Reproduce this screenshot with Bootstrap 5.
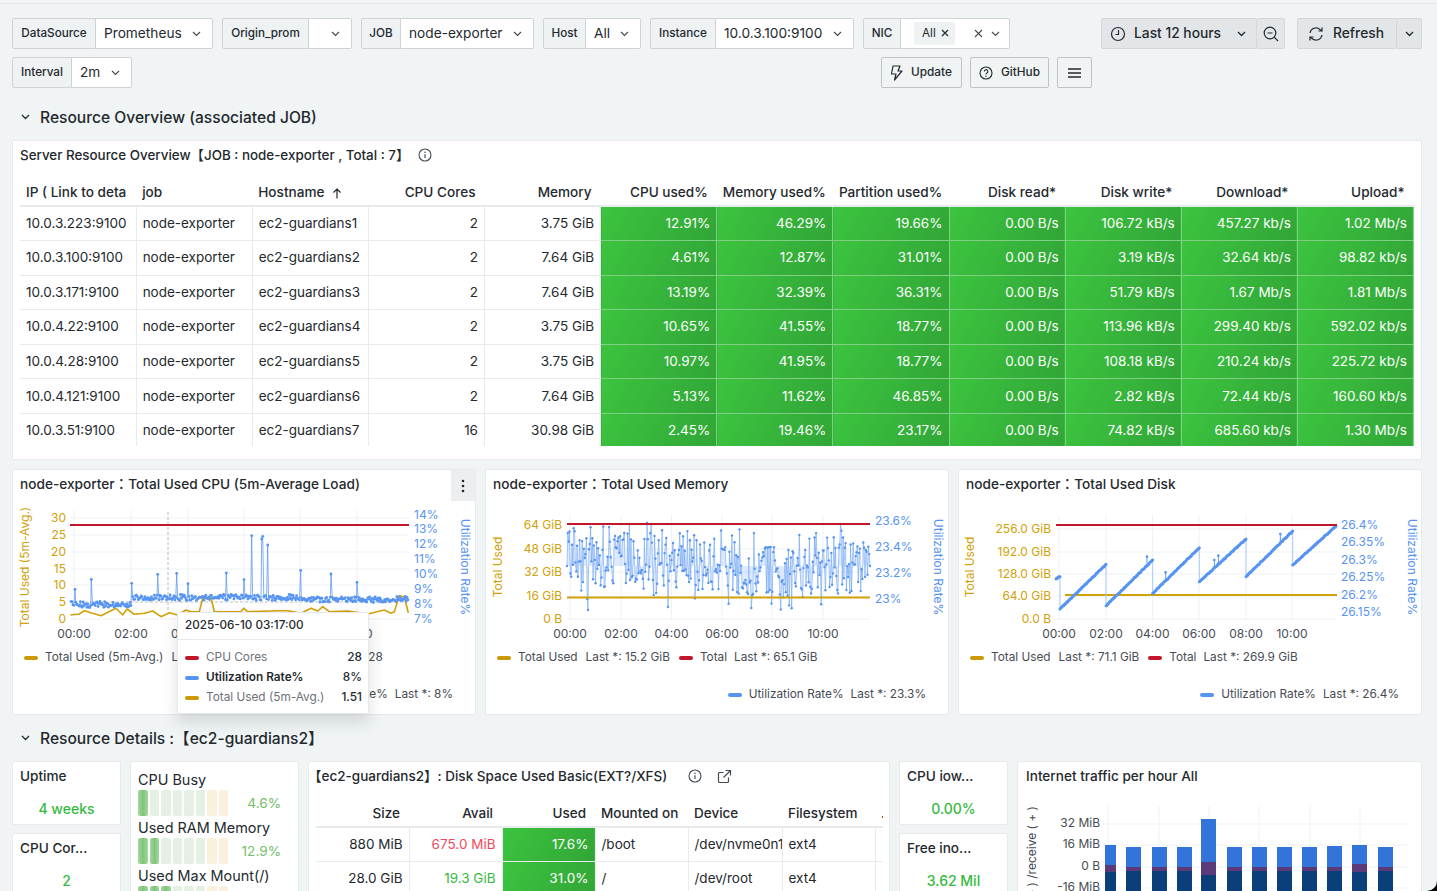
<!doctype html>
<html lang="en">
<head>
<meta charset="utf-8">
<title>Node exporter dashboard</title>
<link href="https://cdn.jsdelivr.net/npm/bootstrap@5.3.0/dist/css/bootstrap.min.css" rel="stylesheet">
<style>
html,body{height:891px;overflow:hidden;background:#000;margin:0}
body{font-family:Inter,"Noto Sans CJK TC","Noto Sans",sans-serif;color:#24292e;font-size:14px}
.page-wrap{width:1437px;height:891px;overflow:hidden;background:#f0f4f5;border-bottom-right-radius:10px;padding:0 15px 0 12px}
.top-edge{height:4px;margin:0 -15px 14px -12px;border-bottom:1px solid #e6e9e9}
.tool-left{width:1080px}
.gap-9{gap:9px}
.var-group{height:31px;flex-wrap:nowrap;width:auto}
.var-group .input-group-text{height:31px;border-color:#cfd3d6;border-radius:2px;padding:0 6px;font-size:11.7px;font-weight:500;background:#eef2f3;color:#24292e}
.var-group .var-val{background:#fff;font-size:13.7px;font-weight:400;justify-content:space-between;padding:0 11px 0 8px}
.w-ds{width:201px}.w-or{width:130px}.w-job{width:173px}.w-host{width:98px}.w-ins{width:204px}.w-nic{width:147px}.w-int{width:120px}
.l-ds{width:84px}.l-or{width:87px}.l-job{width:40px}.l-host{width:43px}.l-ins{width:66px}.l-nic{width:38px}.l-int{width:60px}
.var-group .input-group-text.lab{justify-content:center}
.var-group .var-val{flex:1 1 0;min-width:0}
.var-group .nic-val{padding-right:9px}
.nic-chip{background:#eff2f3;border-radius:2px;font-size:11.7px;padding:3px 6px 3px 8px;margin-left:5px;display:inline-flex;align-items:center;gap:5px}
.ghost-btn{height:31px;border:1px solid #bfc3c6;border-radius:2px;background:#f0f4f5;font-size:11.8px;font-weight:500;color:#24292e;padding:0 8px;display:inline-flex;align-items:center;gap:8px}
.w-upd{width:81px}.w-git{width:79px}.w-men{width:35px;justify-content:center}
.time-btn{height:31px;border:1px solid #d5d8da;background:#e3e6e8;color:#24292e;font-size:13.8px;font-weight:500;padding:0 8px;display:inline-flex;align-items:center;gap:8px;border-radius:2px}
.time-btn svg{flex:none}
.t-range{width:156px}.t-range .chev-end{margin-left:auto;margin-right:2px}.t-zoom{width:29px;justify-content:center;margin-left:-1px;padding:0}.t-ref{width:100px;margin-left:12px;padding:0 0 0 10px;gap:9px}.t-car{width:26px;justify-content:center;margin-left:-1px;padding:0}
.sec-row{display:flex;align-items:center;height:24px;margin:17px 0 11px;font-size:15.6px;font-weight:500;gap:10px;padding-left:9px}
.sec-row span{position:relative;top:1px}
.sec-row2{margin:11px 0 11px}
.panel-card{background:#fff;border:1px solid #e7eaec;border-radius:2px}
.overview{height:320px;padding:0 7px 0 7px}
.panel-title{height:31px;font-size:13.4px;font-weight:500;display:flex;align-items:center;gap:15px;white-space:nowrap}
.overview .panel-title{height:30px;padding-bottom:2px;gap:9px}
.tbl-clip{height:270px;overflow:hidden;margin-top:5px}
.data-tbl{table-layout:fixed;width:1394px;margin:0;--bs-table-bg:transparent;font-size:13.5px}
.data-tbl th{height:30px;padding:3px 9px 0 6px;font-weight:500;font-size:13.6px;border-bottom:2px solid #e8ebed;vertical-align:middle;white-space:nowrap;overflow:hidden;color:#24292e}
.data-tbl td{height:34.6px;padding:0 6px 1px;vertical-align:middle;border-right:1px solid #e8ebed;border-bottom:1px solid #e8ebed;white-space:nowrap;overflow:hidden;color:#24292e}
.data-tbl td.gr{background:linear-gradient(120deg,#3cc43f,#31a537);color:#fff;border-right-color:#7fd083;border-bottom-color:#7fd083}
.chart-grid{display:grid;grid-template-columns:repeat(3,464px);gap:9px;margin-top:9px}
.chart-panel{height:246px;position:relative;overflow:visible}
.chart-panel .panel-title{padding-left:7px;height:30px;padding-bottom:2px;font-size:13.65px}
.chart-box svg{display:block}
.chart-box text{font-family:Inter,"Noto Sans",sans-serif;font-size:12px}
.lg-row{display:flex;align-items:center;height:24px;font-size:11.8px;color:#464c54;white-space:nowrap;gap:7px;padding-left:11px;margin-top:1px}
.lg-row2{margin-top:13px;justify-content:flex-end;padding:0 22px 0 0}
.lg-bar{display:inline-block;width:14px;height:4px;border-radius:2px;flex:none}
.lg-val{margin-left:1px;margin-right:2px}
.c-gold{background:#cc9a06}.c-red{background:#c4162a}.c-blue{background:#5794f2}
.menu-dots{position:absolute;top:0;right:0;width:24px;height:31px;background:#eceef0;display:flex;align-items:center;justify-content:center}
.hover-tip{position:absolute;left:164px;top:142px;width:192px;height:102px;background:#fff;border:1px solid #e7eaec;border-radius:2px;z-index:5;font-size:11.8px}
.tip-head{height:27px;display:flex;align-items:center;padding-left:7px;font-size:11.7px;font-weight:500;border-bottom:1px solid #e7eaec;margin-bottom:8px}
.tip-row{height:20px;display:flex;align-items:center;padding:0 6px 0 7px;gap:7px;color:#6c7278}
.tip-row b{font-weight:500;color:#24292e;margin-left:auto}
.tip-row.act{color:#24292e;font-weight:600}
.det-row{display:flex;gap:9px;align-items:flex-start}
.stat-col{width:109px;display:flex;flex-direction:column;gap:8px;flex:none}
.stat-box{height:64px;padding:0 7px;overflow:hidden}
.stat-box .panel-title{height:30px;font-size:13.6px;padding-bottom:2px}
.stat-val{text-align:center;color:#37b93f;font-weight:500;font-size:14px;line-height:34px}
.gauge-box{width:169px;height:180px;flex:none;padding:9px 7px;overflow:hidden}
.g-title{font-size:14.4px;line-height:18px;height:19px}
.g-line{display:flex;align-items:center;height:26px;margin-bottom:3px;color:#73bf69;font-size:13.6px}
.g-cells{display:flex;gap:2px;height:26px}
.g-cells i{display:block;width:9.5px;background:#e3f0e2;border-radius:2px}
.g-cells i.on{background:linear-gradient(90deg,#a4d8a0,#7fc57a,#a4d8a0)}
.g-cells i.warn{background:#fbf0dc}
.g-val{margin-left:auto;padding-right:10px}
.disk-box{width:582px;height:180px;flex:none;padding:0 7px;overflow:hidden}
.disk-box .panel-title{height:30px;padding-bottom:2px;font-size:13.5px}
.disk-box .panel-title>span{margin-left:-8px}
.disk-box .panel-title .info-gap{margin-left:6px}
.disk-clip{width:567px;overflow:hidden;margin-top:5px}
.disk-tbl{table-layout:fixed;width:568px;margin:0;--bs-table-bg:transparent;font-size:13.5px}
.disk-tbl th{height:30px;padding:3px 9px 0 6px;font-weight:500;border-bottom:2px solid #e8ebed;white-space:nowrap;overflow:hidden;vertical-align:middle;color:#24292e}
.disk-tbl td{height:34.6px;padding:0 6px 1px;vertical-align:middle;border-right:1px solid #e8ebed;border-bottom:1px solid #e8ebed;white-space:nowrap;overflow:hidden;color:#24292e}
.disk-tbl td.gr{background:linear-gradient(120deg,#3cc43f,#31a537);color:#fff}
.txt-red{color:#f2495c!important}.txt-green{color:#37b93f!important}
.traffic-box{width:405px;height:180px;flex:none;overflow:hidden;padding-left:8px}
.traffic-box .panel-title{height:30px;padding-bottom:2px;font-size:13.6px}
.traffic-box .chart-box{margin-top:8px}
</style>
</head>
<body>
<div class="page-wrap">
  <div class="top-edge"></div>

  <div class="d-flex gap-9">
    <div class="tool-left d-flex flex-column gap-2">
      <div class="d-flex gap-9">
        <div class="input-group var-group w-ds"><span class="input-group-text lab l-ds">DataSource</span><span class="input-group-text var-val">Prometheus <svg width="9" height="6" viewBox="0 0 9 6"><path d="M1 1l3.5 3.5L8 1" fill="none" stroke="#464c54" stroke-width="1.2"/></svg></span></div>
        <div class="input-group var-group w-or"><span class="input-group-text lab l-or">Origin_prom</span><span class="input-group-text var-val justify-content-end"><svg width="9" height="6" viewBox="0 0 9 6"><path d="M1 1l3.5 3.5L8 1" fill="none" stroke="#464c54" stroke-width="1.2"/></svg></span></div>
        <div class="input-group var-group w-job"><span class="input-group-text lab l-job">JOB</span><span class="input-group-text var-val">node-exporter <svg width="9" height="6" viewBox="0 0 9 6"><path d="M1 1l3.5 3.5L8 1" fill="none" stroke="#464c54" stroke-width="1.2"/></svg></span></div>
        <div class="input-group var-group w-host"><span class="input-group-text lab l-host">Host</span><span class="input-group-text var-val">All <svg width="9" height="6" viewBox="0 0 9 6"><path d="M1 1l3.5 3.5L8 1" fill="none" stroke="#464c54" stroke-width="1.2"/></svg></span></div>
        <div class="input-group var-group w-ins"><span class="input-group-text lab l-ins">Instance</span><span class="input-group-text var-val">10.0.3.100:9100 <svg width="9" height="6" viewBox="0 0 9 6"><path d="M1 1l3.5 3.5L8 1" fill="none" stroke="#464c54" stroke-width="1.2"/></svg></span></div>
        <div class="input-group var-group w-nic"><span class="input-group-text lab l-nic">NIC</span><span class="input-group-text var-val nic-val"><span class="nic-chip">All <svg width="8" height="8" viewBox="0 0 8 8"><path d="M1 1l6 6M7 1l-6 6" stroke="#24292e" stroke-width="1.2"/></svg></span><span class="d-inline-flex align-items-center gap-2"><svg width="9" height="9" viewBox="0 0 9 9"><path d="M1 1l7 7M8 1l-7 7" stroke="#464c54" stroke-width="1.1"/></svg><svg width="9" height="6" viewBox="0 0 9 6"><path d="M1 1l3.5 3.5L8 1" fill="none" stroke="#464c54" stroke-width="1.2"/></svg></span></span></div>
      </div>
      <div class="d-flex">
        <div class="input-group var-group w-int"><span class="input-group-text lab l-int">Interval</span><span class="input-group-text var-val">2m <svg width="9" height="6" viewBox="0 0 9 6"><path d="M1 1l3.5 3.5L8 1" fill="none" stroke="#464c54" stroke-width="1.2"/></svg></span></div>
        <div class="ms-auto d-flex gap-2">
          <button type="button" class="ghost-btn w-upd"><svg width="13" height="16" viewBox="0 0 13 16"><path d="M3 1h7L8 6h4l-7.5 9L6 9H1.500z" fill="none" stroke="#24292e" stroke-width="1.2" stroke-linejoin="round"/></svg>Update</button>
          <button type="button" class="ghost-btn w-git"><svg width="14" height="14" viewBox="0 0 14 14"><circle cx="7" cy="7" r="6" fill="none" stroke="#24292e" stroke-width="1.1"/><path d="M5.300 5.500a1.800 1.800 0 1 1 2.600 1.600c-.6.300-.9.700-.9 1.300" fill="none" stroke="#24292e" stroke-width="1.1"/><circle cx="7" cy="10.300" r=".7" fill="#24292e"/></svg>GitHub</button>
          <button type="button" class="ghost-btn w-men" aria-label="Menu"><svg width="13" height="10" viewBox="0 0 13 10"><path d="M0 1h13M0 5h13M0 9h13" stroke="#24292e" stroke-width="1.4"/></svg></button>
        </div>
      </div>
    </div>
    <div class="d-flex align-items-start">
      <button type="button" class="time-btn t-range"><svg width="16" height="16" viewBox="0 0 16 16"><circle cx="8" cy="8" r="6.500" fill="none" stroke="#24292e" stroke-width="1.2"/><path d="M8.500 4v4.500H5.500" fill="none" stroke="#24292e" stroke-width="1.2"/></svg><span>Last 12 hours</span><svg class="chev-end" width="9" height="6" viewBox="0 0 9 6"><path d="M1 1l3.500 3.500L8 1" fill="none" stroke="#24292e" stroke-width="1.3"/></svg></button>
      <button type="button" class="time-btn t-zoom" aria-label="Zoom out"><svg width="16" height="16" viewBox="0 0 16 16"><circle cx="7" cy="7" r="5.800" fill="none" stroke="#24292e" stroke-width="1.200"/><path d="M4.500 7h5M11.200 11.200L15 15" stroke="#24292e" stroke-width="1.200"/></svg></button>
      <button type="button" class="time-btn t-ref"><svg width="16" height="16" viewBox="0 0 16 16"><path d="M2 7a6 6 0 0 1 10-3.500L14 5M14 9a6 6 0 0 1-10 3.500L2 11" fill="none" stroke="#24292e" stroke-width="1.200"/><path d="M14 1.500V5h-3.500M2 14.500V11h3.500" fill="none" stroke="#24292e" stroke-width="1.200"/></svg>Refresh</button>
      <button type="button" class="time-btn t-car" aria-label="Refresh interval"><svg width="9" height="6" viewBox="0 0 9 6"><path d="M1 1l3.500 3.500L8 1" fill="none" stroke="#24292e" stroke-width="1.300"/></svg></button>
    </div>
  </div>

  <div class="sec-row"><svg width="9" height="6" viewBox="0 0 9 6"><path d="M1 1l3.500 3.500L8 1" fill="none" stroke="#24292e" stroke-width="1.300"/></svg><span>Resource Overview (associated JOB)</span></div>

  <div class="panel-card overview">
    <div class="panel-title"><span>Server Resource Overview【JOB : node-exporter , Total : 7】</span><svg width="14" height="14" viewBox="0 0 14 14"><circle cx="7" cy="7" r="6" fill="none" stroke="#464c54" stroke-width="1.100"/><path d="M7 6.300v3.800" stroke="#464c54" stroke-width="1.200"/><circle cx="7" cy="4.200" r=".8" fill="#464c54"/></svg></div>
    <div class="tbl-clip">
    <table class="table data-tbl">
      <thead><tr>
        <th>IP ( Link to deta</th><th>job</th><th>Hostname <svg width="10" height="11" viewBox="0 0 10 11" class="ms-1"><path d="M5 10.500V1M1.500 4.500L5 1l3.500 3.500" fill="none" stroke="#24292e" stroke-width="1.200"/></svg></th>
        <th class="text-end">CPU Cores</th><th class="text-end">Memory</th><th class="text-end">CPU used%</th><th class="text-end">Memory used%</th><th class="text-end">Partition used%</th><th class="text-end">Disk read*</th><th class="text-end">Disk write*</th><th class="text-end">Download*</th><th class="text-end">Upload*</th>
      </tr></thead>
      <tbody>
      <tr><td>10.0.3.223:9100</td><td>node-exporter</td><td>ec2-guardians1</td><td class="text-end">2</td><td class="text-end">3.75 GiB</td><td class="gr text-end">12.91%</td><td class="gr text-end">46.29%</td><td class="gr text-end">19.66%</td><td class="gr text-end">0.00 B/s</td><td class="gr text-end">106.72 kB/s</td><td class="gr text-end">457.27 kb/s</td><td class="gr text-end">1.02 Mb/s</td></tr>
      <tr><td>10.0.3.100:9100</td><td>node-exporter</td><td>ec2-guardians2</td><td class="text-end">2</td><td class="text-end">7.64 GiB</td><td class="gr text-end">4.61%</td><td class="gr text-end">12.87%</td><td class="gr text-end">31.01%</td><td class="gr text-end">0.00 B/s</td><td class="gr text-end">3.19 kB/s</td><td class="gr text-end">32.64 kb/s</td><td class="gr text-end">98.82 kb/s</td></tr>
      <tr><td>10.0.3.171:9100</td><td>node-exporter</td><td>ec2-guardians3</td><td class="text-end">2</td><td class="text-end">7.64 GiB</td><td class="gr text-end">13.19%</td><td class="gr text-end">32.39%</td><td class="gr text-end">36.31%</td><td class="gr text-end">0.00 B/s</td><td class="gr text-end">51.79 kB/s</td><td class="gr text-end">1.67 Mb/s</td><td class="gr text-end">1.81 Mb/s</td></tr>
      <tr><td>10.0.4.22:9100</td><td>node-exporter</td><td>ec2-guardians4</td><td class="text-end">2</td><td class="text-end">3.75 GiB</td><td class="gr text-end">10.65%</td><td class="gr text-end">41.55%</td><td class="gr text-end">18.77%</td><td class="gr text-end">0.00 B/s</td><td class="gr text-end">113.96 kB/s</td><td class="gr text-end">299.40 kb/s</td><td class="gr text-end">592.02 kb/s</td></tr>
      <tr><td>10.0.4.28:9100</td><td>node-exporter</td><td>ec2-guardians5</td><td class="text-end">2</td><td class="text-end">3.75 GiB</td><td class="gr text-end">10.97%</td><td class="gr text-end">41.95%</td><td class="gr text-end">18.77%</td><td class="gr text-end">0.00 B/s</td><td class="gr text-end">108.18 kB/s</td><td class="gr text-end">210.24 kb/s</td><td class="gr text-end">225.72 kb/s</td></tr>
      <tr><td>10.0.4.121:9100</td><td>node-exporter</td><td>ec2-guardians6</td><td class="text-end">2</td><td class="text-end">7.64 GiB</td><td class="gr text-end">5.13%</td><td class="gr text-end">11.62%</td><td class="gr text-end">46.85%</td><td class="gr text-end">0.00 B/s</td><td class="gr text-end">2.82 kB/s</td><td class="gr text-end">72.44 kb/s</td><td class="gr text-end">160.60 kb/s</td></tr>
      <tr><td>10.0.3.51:9100</td><td>node-exporter</td><td>ec2-guardians7</td><td class="text-end">16</td><td class="text-end">30.98 GiB</td><td class="gr text-end">2.45%</td><td class="gr text-end">19.46%</td><td class="gr text-end">23.17%</td><td class="gr text-end">0.00 B/s</td><td class="gr text-end">74.82 kB/s</td><td class="gr text-end">685.60 kb/s</td><td class="gr text-end">1.30 Mb/s</td></tr>
      </tbody>
    </table>
    </div>
  </div>

  <div class="chart-grid">
    <div class="panel-card chart-panel">
      <div class="panel-title">node-exporter：Total Used CPU (5m-Average Load)</div>
      <div class="menu-dots"><svg width="4" height="14" viewBox="0 0 4 14"><circle cx="2" cy="2" r="1.300" fill="#24292e"/><circle cx="2" cy="7" r="1.300" fill="#24292e"/><circle cx="2" cy="12" r="1.300" fill="#24292e"/></svg></div>
      <div class="chart-box" id="c1"></div>
      <div class="lg-row"><i class="lg-bar c-gold"></i><span>Total Used (5m-Avg.)</span><span class="lg-val">Last *: 1.51</span><i class="lg-bar c-red"></i><span>CPU Cores</span><span>Last *: 28</span></div>
      <div class="lg-row lg-row2"><i class="lg-bar c-blue"></i><span>Utilization Rate%</span><span>Last *: 8%</span></div>
      <div class="hover-tip shadow">
        <div class="tip-head">2025-06-10 03:17:00</div>
        <div class="tip-row"><i class="lg-bar c-red"></i><span>CPU Cores</span><b>28</b></div>
        <div class="tip-row act"><i class="lg-bar c-blue"></i><span>Utilization Rate%</span><b>8%</b></div>
        <div class="tip-row"><i class="lg-bar c-gold"></i><span>Total Used (5m-Avg.)</span><b>1.51</b></div>
      </div>
    </div>
    <div class="panel-card chart-panel">
      <div class="panel-title">node-exporter：Total Used Memory</div>
      <div class="chart-box" id="c2"></div>
      <div class="lg-row"><i class="lg-bar c-gold"></i><span>Total Used</span><span class="lg-val">Last *: 15.2 GiB</span><i class="lg-bar c-red"></i><span>Total</span><span>Last *: 65.1 GiB</span></div>
      <div class="lg-row lg-row2"><i class="lg-bar c-blue"></i><span>Utilization Rate%</span><span>Last *: 23.3%</span></div>
    </div>
    <div class="panel-card chart-panel">
      <div class="panel-title">node-exporter：Total Used Disk</div>
      <div class="chart-box" id="c3"></div>
      <div class="lg-row"><i class="lg-bar c-gold"></i><span>Total Used</span><span class="lg-val">Last *: 71.1 GiB</span><i class="lg-bar c-red"></i><span>Total</span><span>Last *: 269.9 GiB</span></div>
      <div class="lg-row lg-row2"><i class="lg-bar c-blue"></i><span>Utilization Rate%</span><span>Last *: 26.4%</span></div>
    </div>
  </div>

  <div class="sec-row sec-row2"><svg width="9" height="6" viewBox="0 0 9 6"><path d="M1 1l3.500 3.500L8 1" fill="none" stroke="#24292e" stroke-width="1.300"/></svg><span>Resource Details :【ec2-guardians2】</span></div>

  <div class="det-row">
    <div class="stat-col">
      <div class="panel-card stat-box"><div class="panel-title">Uptime</div><div class="stat-val">4 weeks</div></div>
      <div class="panel-card stat-box"><div class="panel-title">CPU Cor...</div><div class="stat-val">2</div></div>
    </div>
    <div class="panel-card gauge-box">
      <div class="g-title">CPU Busy</div>
      <div class="g-line"><div class="g-cells"><i class="on"></i><i></i><i></i><i></i><i></i><i></i><i class="warn"></i><i class="warn"></i></div><span class="g-val">4.6%</span></div>
      <div class="g-title">Used RAM Memory</div>
      <div class="g-line"><div class="g-cells"><i class="on"></i><i class="on"></i><i></i><i></i><i></i><i></i><i class="warn"></i><i class="warn"></i></div><span class="g-val">12.9%</span></div>
      <div class="g-title">Used Max Mount(/)</div>
      <div class="g-line"><div class="g-cells"><i class="on"></i><i class="on"></i><i class="on"></i><i></i><i></i><i></i><i class="warn"></i><i class="warn"></i></div><span class="g-val">31.0%</span></div>
    </div>
    <div class="panel-card disk-box">
      <div class="panel-title"><span>【ec2-guardians2】: Disk Space Used Basic(EXT?/XFS)</span><svg class="info-gap" width="14" height="14" viewBox="0 0 14 14"><circle cx="7" cy="7" r="6" fill="none" stroke="#464c54" stroke-width="1.100"/><path d="M7 6.300v3.800" stroke="#464c54" stroke-width="1.200"/><circle cx="7" cy="4.200" r=".8" fill="#464c54"/></svg><svg width="15" height="15" viewBox="0 0 15 15"><path d="M11.500 8.500v4a1 1 0 0 1-1 1h-8a1 1 0 0 1-1-1v-8a1 1 0 0 1 1-1h4M8.500 1.500h5v5M13.500 1.500L6.500 8.500" fill="none" stroke="#464c54" stroke-width="1.200"/></svg></div>
      <div class="disk-clip">
      <table class="table disk-tbl">
        <colgroup><col style="width:93px"><col style="width:93px"><col style="width:93px"><col style="width:93px"><col style="width:94px"><col style="width:93px"><col></colgroup>
        <thead><tr><th class="text-end">Size</th><th class="text-end">Avail</th><th class="text-end">Used</th><th>Mounted on</th><th>Device</th><th>Filesystem</th><th>.</th></tr></thead>
        <tbody>
          <tr><td class="text-end">880 MiB</td><td class="text-end txt-red">675.0 MiB</td><td class="gr text-end">17.6%</td><td>/boot</td><td>/dev/nvme0n1</td><td>ext4</td><td></td></tr>
          <tr><td class="text-end">28.0 GiB</td><td class="text-end txt-green">19.3 GiB</td><td class="gr text-end">31.0%</td><td>/</td><td>/dev/root</td><td>ext4</td><td></td></tr>
        </tbody>
      </table>
      </div>
    </div>
    <div class="stat-col">
      <div class="panel-card stat-box"><div class="panel-title">CPU iow...</div><div class="stat-val">0.00%</div></div>
      <div class="panel-card stat-box"><div class="panel-title">Free ino...</div><div class="stat-val">3.62 Mil</div></div>
    </div>
    <div class="panel-card traffic-box">
      <div class="panel-title">Internet traffic per hour All</div>
      <div class="chart-box" id="c4"></div>
    </div>
  </div>
</div>

<script src="https://cdn.jsdelivr.net/npm/bootstrap@5.3.0/dist/js/bootstrap.bundle.min.js"></script>
<script>
(function(){
  var GOLD='#d1a108',RED='#c4162a',BLUE='#5794f2',GRID='#eff1f2';
  var seed=12345;function rnd(){seed=(seed*1664525+1013904223)%4294967296;return seed/4294967296;}
  function svg(vb,w,h,body){return '<svg width="'+w+'" height="'+h+'" viewBox="'+vb+'">'+body+'</svg>';}
  function txt(x,y,s,c,a){return '<text x="'+x+'" y="'+(y+4)+'" fill="'+c+'" text-anchor="'+(a||'start')+'">'+s+'</text>';}
  function rot(x,y,s,c,d,anc){return '<text transform="translate('+x+' '+y+') rotate('+d+')" fill="'+c+'" text-anchor="'+(anc||'middle')+'" dominant-baseline="middle">'+s+'</text>';}
  function line(x1,y1,x2,y2,c,w,extra){return '<line x1="'+x1+'" y1="'+y1+'" x2="'+x2+'" y2="'+y2+'" stroke="'+c+'" stroke-width="'+(w||1)+'" '+(extra||'')+'/>';}
  function poly(p,c,w,fill,op){return '<polyline points="'+p.map(function(a){return a[0].toFixed(1)+','+a[1].toFixed(1)}).join(' ')+'" fill="'+(fill||'none')+'" '+(fill?'fill-opacity=".2"':'')+' stroke="'+c+'" stroke-opacity="'+(op||1)+'" stroke-width="'+(w||1)+'" stroke-linejoin="round"/>';}
  function dots(p,r){return p.map(function(a){return '<circle cx="'+a[0].toFixed(1)+'" cy="'+a[1].toFixed(1)+'" r="'+r+'" fill="'+BLUE+'"/>'}).join('');}
  function frame(gx,labels,x0,x1,ys,yt,yb){
    var s='';gx.forEach(function(x){s+=line(x,yt,x,yb,GRID)});ys.forEach(function(y){s+=line(x0,y,x1,y,GRID)});
    gx.forEach(function(x,i){if(labels[i])s+=txt(x,634,labels[i],'#464c54','middle')});return s;
  }
  var T=['00:00','02:00','04:00','06:00','08:00','10:00'];

  /* chart 1 */
  var s=frame([73,130,187,243,299,356],T,69,408,[518,535,552,569,585,602,619],510,621);
  [[30,518],[25,535],[20,552],[15,569],[10,585],[5,602],[0,619]].forEach(function(a){s+=txt(65,a[1],a[0],GOLD,'end')});
  [['14%',515],['13%',529],['12%',544],['11%',559],['10%',574],['9%',589],['8%',604],['7%',619]].forEach(function(a){s+=txt(413,a[1],a[0],BLUE)});
  s+=rot(25,567,'Total Used (5m-Avg.)',GOLD,-90)+rot(463,567,'Utilization Rate%',BLUE,90);
  s+=line(69,602,408,602,'#c8cbcd',1,'stroke-dasharray="3 2"')+line(167,512,167,612,'#b5b8ba',1,'stroke-dasharray="3 2"');
  var gold=[[208,450],[235,447],[250,437],[270,443],[300,452],[345,430],[365,450],[378,432],[400,448],[430,445],[455,438],[480,455],[505,443],[530,450],[555,435],[570,440],[595,440],[605,400],[630,398],[640,440],[720,440],[728,430],[740,440],[830,437],[860,437],[900,445],[930,430],[950,438],[965,425],[985,440],[1040,438],[1100,447],[1150,435],[1170,445],[1180,440],[1195,392],[1210,395],[1222,443]].map(function(a){return [a[0]/3,a[1]/3+465]});
  s+=poly(gold,GOLD,1.6);
  var b=[],i,x;
  for(i=0;i<=360;i++){x=70+i*(407-70)/360;b.push([x,(x<131?604.5:(x<300?597.5:599.5))+(rnd()-.5)*6]);}
  [[222,373],[271,343],[392,300],[392,355],[470,328],[527,325],[561,356],[676,324],[729,344],[752,212],[782,222],[785,214],[800,240],[899,316],[990,327],[1068,352]].forEach(function(a){
    var px=a[0]/3,idx=Math.round((px-70)/(337/360));b[idx]=[px,a[1]/3+465];
  });
  s+=poly(b,BLUE,1,null,.75)+dots(b,1.4);
  s+=line(69,525,408,525,RED,1.8);
  document.getElementById('c1').innerHTML=svg('12 500 464 145',464,145,s);

  /* chart 2 */
  s=frame([569,620,670.5,721,771,822],T,566,869,[525,549,572,596,619],515,621);
  [['64 GiB',525],['48 GiB',549],['32 GiB',572],['16 GiB',596],['0 B',619]].forEach(function(a){s+=txt(561,a[1],a[0],GOLD,'end')});
  [['23.6%',521],['23.4%',547],['23.2%',573],['23%',599]].forEach(function(a){s+=txt(874,a[1],a[0],BLUE)});
  s+=rot(498,567,'Total Used',GOLD,-90)+rot(936,567,'Utilization Rate%',BLUE,90);
  b=[];
  for(i=0;i<=360;i++){x=566+i*(869-566)/360;var c=565-8*Math.sin((x-580)/45);var y=c+(rnd()-.5)*(rnd()>.6?78:52);if(y<523)y=523;if(y>610)y=610;b.push([x,y]);}
  b[25]=[b[25][0],610];b[120]=[b[120][0],607];b[100]=[b[100][0],524];b[74]=[b[74][0],524];b[325]=[b[325][0],524];
  b[0]=[b[0][0],566];b[360]=[b[360][0],566];
  s+=poly(b,BLUE,.7,BLUE,.7)+dots(b,1.2);
  s+=line(566,524,869,524,RED,1.8)+line(566,597.5,869,597.5,GOLD,1.8);
  document.getElementById('c2').innerHTML=svg('485 500 464 145',464,145,s);

  /* chart 3 */
  s=frame([1058,1105,1151.5,1198,1245,1291],T,1055,1336,[529,552,574,596,619],515,621);
  [['256.0 GiB',529],['192.0 GiB',552],['128.0 GiB',574],['64.0 GiB',596],['0.0 B',619]].forEach(function(a){s+=txt(1050,a[1],a[0],GOLD,'end')});
  [['26.4%',525],['26.35%',542],['26.3%',560],['26.25%',577],['26.2%',595],['26.15%',612]].forEach(function(a){s+=txt(1340,a[1],a[0],BLUE)});
  s+=rot(970,567,'Total Used',GOLD,-90)+rot(1410,567,'Utilization Rate%',BLUE,90);
  s+=line(1064,595,1336,595,GOLD,1.8);
  var segs=[[300,342,312,335],[312,432,450,298],[450,422,590,285],[590,385,730,248],[730,350,870,222],[870,335,1010,198],[1010,300,1140,183]];
  b=[];segs.forEach(function(g){var n=Math.max(2,Math.round((g[2]-g[0])/2.2));for(var k=0;k<=n;k++){var t=k/n;b.push([955+(g[0]+(g[2]-g[0])*t)/3,465+(g[1]+(g[3]-g[1])*t)/3+(k&&k<n?(rnd()-.5)*1:0)]);}});
  s+=poly(b,'#a9c8f8',1);
  var sp=[[573,275,300],[629,322,345],[775,285,312],[787,272,305],[973,207,238]];
  sp.forEach(function(a){s+=line(955+a[0]/3,465+a[1]/3,955+a[0]/3,465+a[2]/3,BLUE,1)+'<circle cx="'+(955+a[0]/3)+'" cy="'+(465+a[1]/3)+'" r="1.300" fill="'+BLUE+'"/>'});
  s+=dots(b,1.5);
  s+=line(1055,525,1336,525,RED,1.8);
  document.getElementById('c3').innerHTML=svg('958 500 464 145',464,145,s);

  /* chart 4 */
  s='';[1108,1159,1209,1259,1310,1360].forEach(function(x){s+=line(x,806,x,891,GRID)});
  [824,845,867,888].forEach(function(y){s+=line(1103,y,1408,y,GRID)});
  [['32 MiB',823],['16 MiB',844],['0 B',866],['-16 MiB',887]].forEach(function(a){s+=txt(1100,a[1],a[0],'#464c54','end')});
  s+=rot(1033,806,'( - ) /receive ( + )','#464c54',-90,'end');
  [[1105,11,845,865,872],[1126,15,847,867,871],[1152,15,847,867,871],[1177,15,847,867,871],[1201,15,819,862,875],[1227,15,847,867,871],[1252,15,847,867,871],[1277,15,847,867,871],[1302,15,847,867,871],[1327,15,846,867,871],[1352,15,845,864,872],[1378,15,847,867,871]].forEach(function(a){
    s+='<rect x="'+a[0]+'" y="'+a[2]+'" width="'+a[1]+'" height="'+(a[3]-a[2])+'" fill="#3274d9"/>';
    s+='<rect x="'+a[0]+'" y="'+a[3]+'" width="'+a[1]+'" height="'+(a[4]-a[3])+'" fill="#5a3a78"/>';
    s+='<rect x="'+a[0]+'" y="'+a[4]+'" width="'+a[1]+'" height="'+(891-a[4])+'" fill="#0a3f7a"/>';
  });
  document.getElementById('c4').innerHTML=svg('1026 800 396 91',396,91,s);
})();
</script>
</body>
</html>
